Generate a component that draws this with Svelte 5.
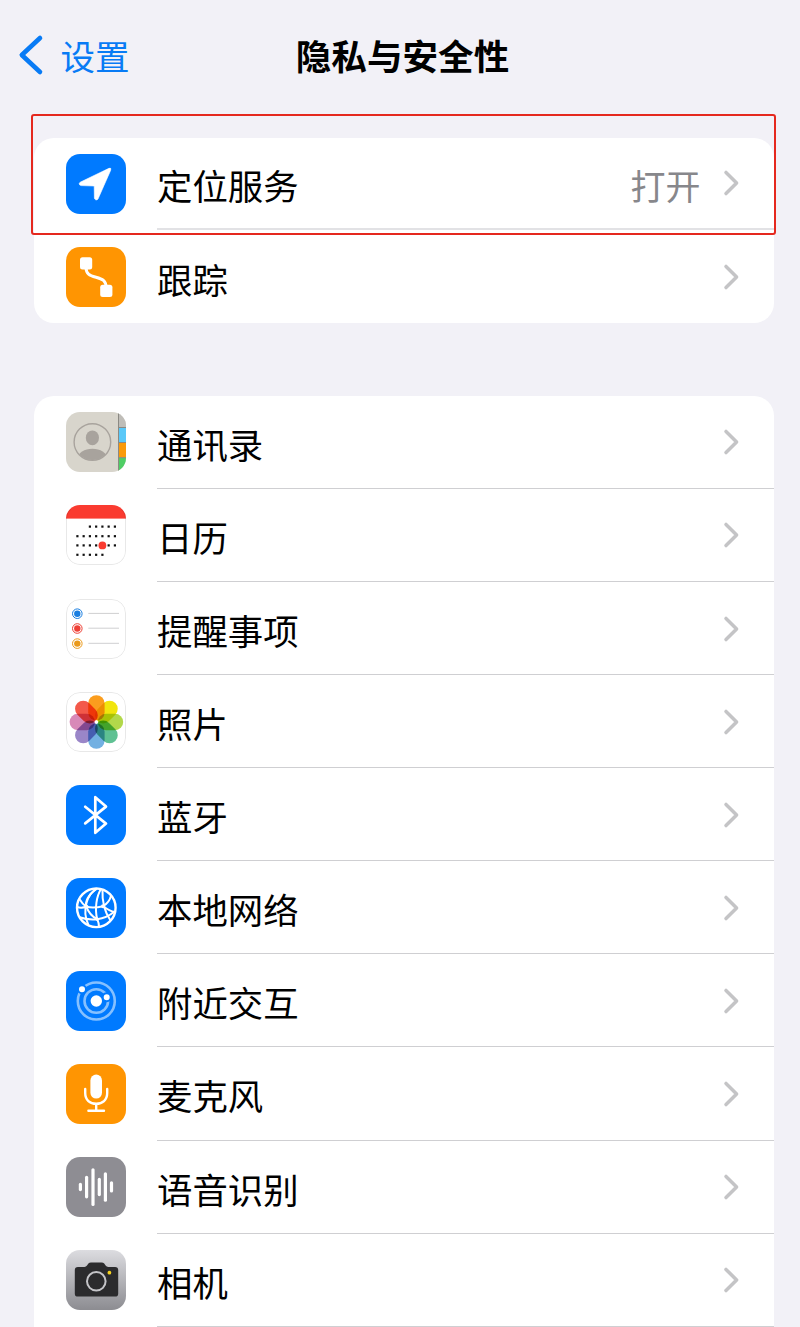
<script>
	const tracking = [{ id: 'location', label: '定位服务', value: '打开', marked: true }, { id: 'tracking', label: '跟踪' }];

	const apps = [
		{ id: 'contacts', label: '通讯录' },
		{ id: 'calendar', label: '日历' },
		{ id: 'reminders', label: '提醒事项' },
		{ id: 'photos', label: '照片' },
		{ id: 'bluetooth', label: '蓝牙' },
		{ id: 'network', label: '本地网络' },
		{ id: 'nearby', label: '附近交互' },
		{ id: 'microphone', label: '麦克风' },
		{ id: 'speech', label: '语音识别' },
		{ id: 'camera', label: '相机' }
	];

	const groups = [tracking, apps];

	const petals = ['#fb9d1e', '#f1e50e', '#b2d84a', '#5fc193', '#72b0e2', '#9a86c8', '#d889b8', '#f3594a'];

	// first and last dot column for each calendar week
	const weeks = [
		{ y: 21.6, from: 2, to: 6 },
		{ y: 31.2, from: 0, to: 6 },
		{ y: 40.4, from: 0, to: 6 },
		{ y: 49.8, from: 0, to: 4 }
	];

	const todos = [
		{ y: 14.7, color: '#1a7ee0' },
		{ y: 29.5, color: '#ee4036' },
		{ y: 44.6, color: '#ea9a1c' }
	];

	const bars = [
		[14.4, 25.8, 34.2],
		[20.6, 18.8, 41.4],
		[27, 11.2, 49],
		[33.3, 20.8, 39.2],
		[39.4, 15.2, 44.8],
		[45.5, 24.2, 35.6]
	];
</script>

<div class="page">
	<header class="navbar">
		<a class="back" href="#settings">
			<svg class="back-arrow" viewBox="0 0 26 42">
				<path d="M22 4 L3.8 21 L22 38" />
			</svg>
			<span>设置</span>
		</a>
		<h1>隐私与安全性</h1>
	</header>

	<main>
		{#each groups as group}
			<ul class="group">
				{#each group as item}
					<li class="row">
						<div class="icon {item.id}">
							<svg viewBox="0 0 60 60">
								{#if item.id === 'location'}
									<path d="M14.6 28 L43 14.3 Q45.6 13.5 44.7 16.2 L32 45 Q31 46.4 29.7 45.8 Q28.5 45.2 28.4 44 L28.2 32 L15.2 31.6 Q13.4 31.4 13.2 29.8 Q13.2 28.8 14.6 28 Z" fill="#fff" stroke="#fff" stroke-width="0.6" />
								{:else if item.id === 'tracking'}
									<path d="M20 20 C20 27 23.5 28.4 30 30.2 C36.5 32 40 33.5 40 40" fill="none" stroke="#fff" stroke-width="3" />
									<rect x="14" y="10.2" width="12.2" height="12.2" rx="2.5" fill="#fff" />
									<rect x="34.2" y="37.8" width="12.2" height="12.2" rx="2.5" fill="#fff" />
								{:else if item.id === 'contacts'}
									<rect x="52.5" width="8" height="15.5" fill="#bfbdb8" />
									<rect x="52.5" y="15.5" width="8" height="15" fill="#5ac8f8" />
									<rect x="52.5" y="30.5" width="8" height="15.2" fill="#fa9a0b" />
									<rect x="52.5" y="45.7" width="8" height="15" fill="#4fce65" />
									<path d="M52.5 0 V60 M52.5 15.5 H60 M52.5 30.5 H60 M52.5 45.7 H60" stroke="#8b8983" stroke-width="1" />
									<clipPath id="avatar"><circle cx="26.4" cy="30" r="18" /></clipPath>
									<g clip-path="url(#avatar)" fill="#a8a39d">
										<ellipse cx="26.4" cy="25.8" rx="6.6" ry="7.4" />
										<ellipse cx="26.4" cy="46.5" rx="14.6" ry="9.8" />
									</g>
									<circle cx="26.4" cy="30" r="18.3" fill="none" stroke="#a8a39d" stroke-width="1.4" />
								{:else if item.id === 'calendar'}
									<rect width="60" height="13.6" fill="#fa3b30" />
									{#each weeks as week}
										{#each Array(week.to - week.from + 1) as _, i}
											<rect x={10.3 + (week.from + i) * 6.25} y={week.y - 1.1} width="2.2" height="2.2" fill="#111" />
										{/each}
									{/each}
									<circle cx="36.4" cy="40.4" r="3.9" fill="#fa3b30" />
								{:else if item.id === 'reminders'}
									{#each todos as todo}
										<circle cx="11.3" cy={todo.y} r="4.8" fill="none" stroke={todo.color} stroke-width="1" />
										<circle cx="11.3" cy={todo.y} r="3.2" fill={todo.color} />
										<path d="M22.3 {todo.y - 0.3} H53" stroke="#cfcfd1" stroke-width="1" />
									{/each}
								{:else if item.id === 'photos'}
									{#each petals as color, i}
										<rect class="petal" x="22.2" y="3.2" width="16.4" height="25.4" rx="8.2" fill={color} transform="rotate({i * 45} 30.4 30)" />
									{/each}
									<circle cx="30.4" cy="30" r="1.8" fill="#fff" />
								{:else if item.id === 'bluetooth'}
									<path d="M19.2 21.8 L40 38.6 L29.3 47.8 V12.2 L40 21.6 L19.2 38.4" fill="none" stroke="#fff" stroke-width="2.7" stroke-linecap="round" stroke-linejoin="round" />
								{:else if item.id === 'network'}
									<g fill="none" stroke="#fff" stroke-width="2">
										<circle cx="30.3" cy="29.8" r="19.3" stroke-width="2.4" />
										<path d="M30.5 10.8 C22 15.5 15 31 22.5 47.2" />
										<path d="M30.5 10.8 C22 17 18.8 24 20.5 28.8 C23 36 27 39 31.2 41.2 C32.5 44 33 46.5 33 48.8" />
										<path d="M35 11 C30.5 18 28.5 31 31.2 41.2" />
										<path d="M36.5 11.2 C36 22 38 33 44.5 42.5" />
										<path d="M13 20.6 C15 24 17.5 26.8 20.5 28.8 C26 30 32 29.4 37 28.2 C41 26 44 22 45 17.8" />
										<path d="M11.2 29 C14 30 17 29.8 20.5 28.8" />
										<path d="M37 28.2 C41 31 45 33.2 48.6 34" />
										<path d="M13.5 39.2 C19 41.2 25 41.8 31.2 41.2 C38 40.5 44.5 37 48.6 33.6" />
									</g>
									<g fill="#fff">
										<circle cx="20.5" cy="28.8" r="2" />
										<circle cx="37" cy="28.2" r="2" />
										<circle cx="31.2" cy="41.2" r="1.8" />
									</g>
								{:else if item.id === 'nearby'}
									<g fill="none" stroke="#85c0ff" stroke-width="2.6">
										<circle cx="30.3" cy="30" r="11.8" />
										<circle cx="30.3" cy="30" r="18.5" />
									</g>
									<g fill="#fff" stroke="#007aff" stroke-width="2">
										<circle cx="16" cy="18.2" r="4" />
										<circle cx="40.7" cy="26.2" r="4" />
									</g>
									<circle cx="30.3" cy="30" r="5.7" fill="#fff" />
								{:else if item.id === 'microphone'}
									<rect x="24.4" y="10.6" width="11.6" height="24" rx="5.8" fill="#fff" />
									<path d="M19.2 25 V29 C19.2 36 24 39.8 30.2 39.8 C36.4 39.8 41.2 36 41.2 29 V25 M30.2 40 V46.8 M22.4 46.8 H38" fill="none" stroke="#fff" stroke-width="2.4" stroke-linecap="round" />
								{:else if item.id === 'speech'}
									{#each bars as [x, top, bottom]}
										<rect x={x - 1.6} y={top} width="3.2" height={bottom - top} rx="1.6" fill="#fff" />
									{/each}
								{:else if item.id === 'camera'}
									<path d="M12 17 H18.5 Q20 17 21 15.6 L22.4 13.6 Q23.3 12.4 25 12.4 H35.6 Q37.3 12.4 38.2 13.6 L39.6 15.6 Q40.6 17 42.2 17 H49 Q52.2 17 52.2 20 V43.4 Q52.2 46.6 49 46.6 H12 Q8.8 46.6 8.8 43.4 V20 Q8.8 17 12 17 Z" fill="#2b2b2d" />
									<circle cx="30.3" cy="31.3" r="9.3" fill="none" stroke="#c4c4c8" stroke-width="2" />
									<circle cx="43.4" cy="22.7" r="1.9" fill="#f5d21f" />
								{/if}
							</svg>
						</div>
						<div class="body">
							<span class="label">{item.label}</span>
							{#if item.value}
								<span class="value">{item.value}</span>
							{/if}
							<svg class="chevron" viewBox="0 0 18 28">
								<path d="M3 3.4 L13.6 14 L3 24.6" />
							</svg>
						</div>
						{#if item.marked}
							<div class="marker"></div>
						{/if}
					</li>
				{/each}
			</ul>
		{/each}
	</main>
</div>

<style>
	:global(body) {
		background: #f2f1f7;
	}

	.page {
		height: 1327px;
		overflow: hidden;
		background: #f2f1f7;
		color: #000;
		font-family: 'Noto Sans CJK SC', sans-serif;
		font-size: 35px;
	}

	.navbar {
		display: grid;
		grid-template-columns: 1fr auto 1fr;
		align-items: center;
		height: 110px;
		padding: 0 13px 0 18px;
	}

	.back {
		display: flex;
		align-items: center;
		gap: 16.5px;
		color: #087bf5;
		font-size: 34.5px;
		line-height: 50px;
		text-decoration: none;
	}

	.back-arrow {
		width: 26px;
		height: 42px;
		fill: none;
		stroke: currentColor;
		stroke-width: 4.6;
		stroke-linecap: round;
		stroke-linejoin: round;
	}

	h1 {
		margin: 0;
		font-size: 35.6px;
		font-weight: 700;
		line-height: 48px;
	}

	main {
		display: flex;
		flex-direction: column;
		gap: 72.5px;
		padding: 27.5px 26.5px 0 33.5px;
	}

	.group {
		margin: 0;
		padding: 0;
		list-style: none;
		background: #fff;
		border-radius: 20px;
	}

	/* the app list carries on below the fold */
	.group:last-child {
		padding-bottom: 40px;
	}

	.row {
		position: relative;
		display: flex;
		align-items: center;
		gap: 31px;
		height: 93.1px;
		padding-left: 32.5px;
	}

	.group:first-child .row {
		height: 92.9px;
	}

	.icon {
		flex: none;
		width: 60px;
		height: 60px;
		border-radius: 14px;
		overflow: hidden;
		background: #007aff;
	}

	.icon svg {
		display: block;
		width: 100%;
		height: 100%;
	}

	.tracking,
	.microphone {
		background: #ff9502;
	}

	.contacts {
		background: #d8d5cc;
	}

	.calendar,
	.reminders,
	.photos {
		position: relative;
		background: #fff;
	}

	/* hairline over the artwork */
	.calendar::after,
	.reminders::after,
	.photos::after {
		content: '';
		position: absolute;
		inset: 0;
		border: 1px solid rgba(0, 0, 0, 0.09);
		border-radius: 14px;
	}

	.calendar::after {
		border-top-color: transparent;
	}

	.photos svg {
		isolation: isolate;
	}

	.petal {
		mix-blend-mode: multiply;
	}

	.speech {
		background: #8e8d93;
	}

	.camera {
		background: linear-gradient(#dcdce0, #8c8c91);
	}

	.body {
		flex: 1;
		display: flex;
		align-items: center;
		box-sizing: border-box;
		height: 100%;
		padding: 1px 33px 0 0;
		border-bottom: 1px solid #cfcfd2;
	}

	.group:first-child .body {
		border-bottom: 2px solid #e2e2e5;
	}

	.group:first-child .row:last-child .body {
		border-bottom: none;
	}

	.label,
	.value {
		padding-top: 2px;
	}

	.label {
		flex: 1;
		font-size: 35.4px;
	}

	.value {
		margin-right: 22px;
		color: #87878b;
	}

	.chevron {
		width: 18px;
		height: 28px;
		fill: none;
		stroke: #c4c4c6;
		stroke-width: 3.5;
		stroke-linecap: round;
		stroke-linejoin: round;
	}

	.marker {
		position: absolute;
		top: -23.5px;
		right: -2.5px;
		bottom: -5px;
		left: -2.5px;
		border: 2px solid #e5281e;
		border-radius: 3px;
		z-index: 1;
	}
</style>
